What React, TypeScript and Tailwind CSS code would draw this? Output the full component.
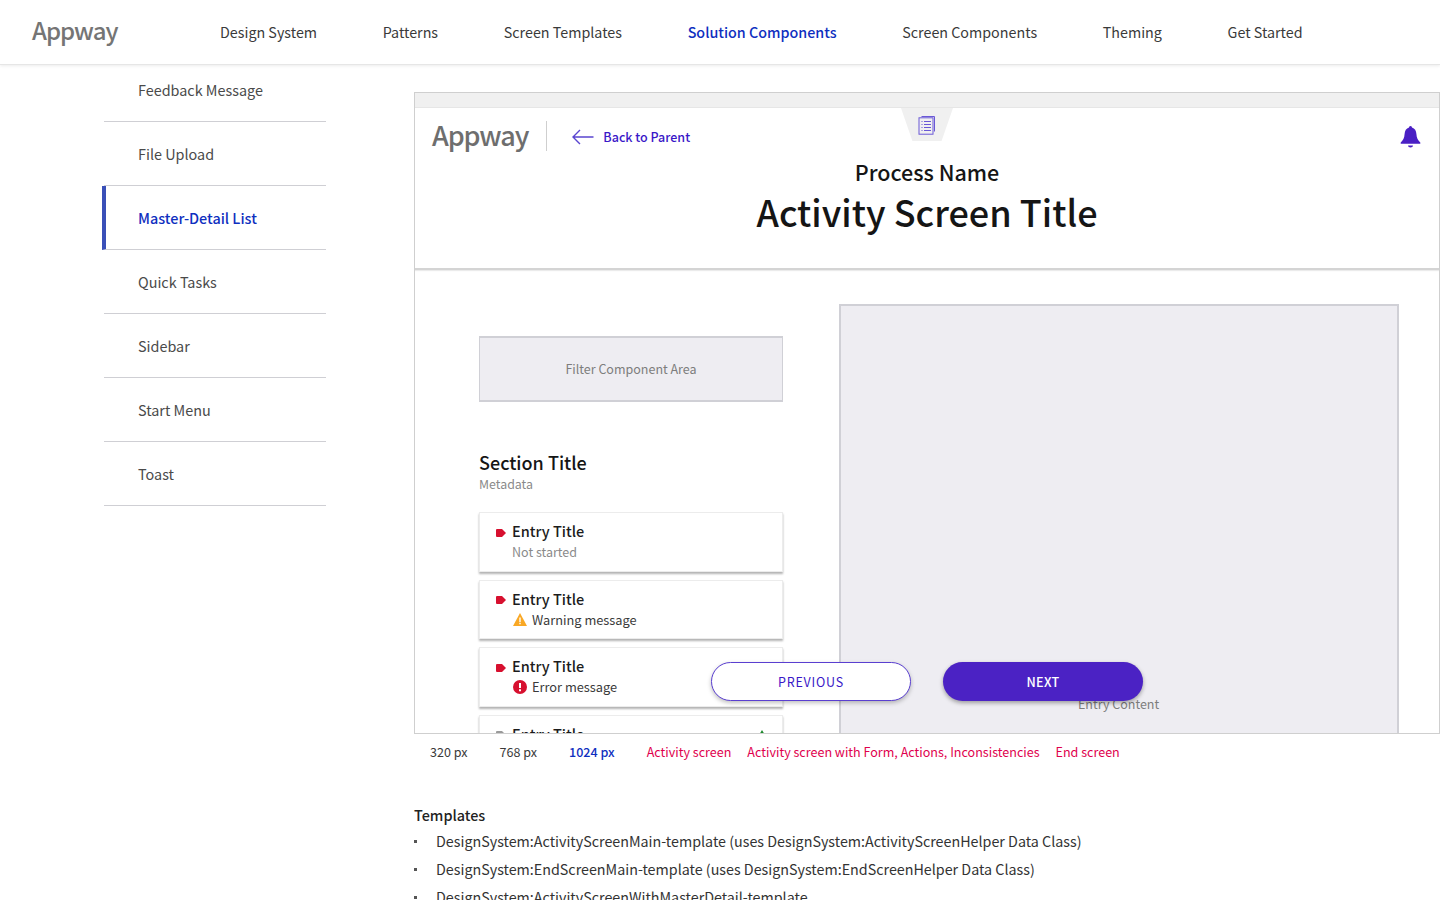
import React from 'react';

const FONT = 'font-["Noto_Sans_CJK_JP","Noto_Sans",sans-serif]';

const navItems = ['Design System', 'Patterns', 'Screen Templates', 'Solution Components', 'Screen Components', 'Theming', 'Get Started'];
const sideItems = ['Feedback Message', 'File Upload', 'Master-Detail List', 'Quick Tasks', 'Sidebar', 'Start Menu', 'Toast'];

const Tag = ({ color = '#d7102f' }: { color?: string }) => (
  <svg width="10" height="8" viewBox="0 0 10 8" className="mt-[3px] shrink-0">
    <path d="M1 0h5L10 4 6 8H1a1 1 0 0 1-1-1V1a1 1 0 0 1 1-1z" fill={color} />
  </svg>
);

const EntryCard = ({ sub, children }: { sub?: string; children?: React.ReactNode }) => (
  <div className="relative h-[59.500px] w-[304px] shrink-0 border border-[#ececec] bg-white pl-4 pt-[8px] shadow-[0_2px_2px_rgba(0,0,0,0.3)]">
    <div className="flex h-[20px] items-center gap-[6px]">
      <Tag />
      <span className="text-[14.500px] leading-[20px] font-medium text-[#1c1c1c]">Entry Title</span>
    </div>
    {sub && <div className="ml-4 mt-[1px] text-[12.500px] leading-[20px] text-[#8a8a8a]">{sub}</div>}
    {children}
  </div>
);

const App: React.FC = () => {
  return (
    <div className={`${FONT} flex h-[900px] w-[1440px] flex-col overflow-hidden bg-white text-[#333]`}>
      <header className="relative z-10 flex h-[65px] shrink-0 items-center border-b border-[#e6e6e6] bg-white pl-8 shadow-[0_1px_3px_rgba(0,0,0,0.08)]">
        <span className="mt-[-4px] w-[188px] text-[24px] leading-[32px] font-medium tracking-[-1px] text-[#757575]">Appway</span>
        <nav className="mt-[-1px] flex gap-[65.700px]">
          {navItems.map(item => (
            <a key={item} className={item === 'Solution Components' ? 'text-[14.300px] leading-[22px] font-medium text-[#0f2fc0]' : 'text-[14.300px] leading-[22px] text-[#3a3a3a]'}>
              {item}
            </a>
          ))}
        </nav>
      </header>

      <div className="flex min-h-0 flex-1">
        <aside className="ml-[102px] mt-[-7px] w-[224px] shrink-0">
          {sideItems.map(item => {
            const active = item === 'Master-Detail List';
            return (
              <div key={item} className={`flex h-[64px] items-center border-b border-[#cfcfd4] ${active ? 'border-l-[4px] border-l-[#3a50b8] pl-[32px]' : 'ml-[2px] pl-[34px]'}`}>
                <span className={active ? 'text-[14.400px] leading-[22px] font-medium text-[#0f2fc0]' : 'text-[14.400px] leading-[22px] text-[#4a4a4a]'}>{item}</span>
              </div>
            );
          })}
        </aside>

        <main className="ml-[88px] flex min-w-0 flex-1 flex-col pt-[27px]">
          <div className="relative flex h-[642px] w-[1026px] shrink-0 flex-col overflow-hidden border border-[#cfcfcf]">
            <div className="h-[15px] shrink-0 border-b border-[#e6e6e6] bg-[#f0f0f0]" />

            <div className="relative z-[1] h-[162px] shrink-0 border-b-2 border-[#d4d4d4] bg-white shadow-[0_1px_1px_rgba(0,0,0,0.08)]">
              <div className="flex items-center pl-[17px] pt-[13px]">
                <span className="mt-[-3px] text-[27px] leading-[30px] font-medium tracking-[-1.100px] text-[#6e6e6e]">Appway</span>
                <div className="ml-[18px] h-[30px] w-px bg-[#cfcfcf]" />
                <svg width="22" height="16" viewBox="0 0 22 16" fill="none" stroke="#5a45d0" strokeWidth="1.4" className="ml-[25px] mt-[1px]">
                  <path d="M21.500 8H1M8 1 1 8l7 7" />
                </svg>
                <span className="ml-[9px] mt-[1px] text-[12.500px] leading-[20px] font-medium text-[#3a18c8]">Back to Parent</span>
              </div>
              <div className="absolute left-[486px] top-0 flex h-[33px] w-[52px] justify-center bg-[#f0f0f0] pt-[7px] [clip-path:polygon(0_0,100%_0,78%_100%,22%_100%)]">
                <svg width="18" height="20" viewBox="0 0 18 20" fill="none" stroke="#6a58d6" strokeWidth="1">
                  <path d="M3.500 1.500h13v15" />
                  <rect x="1" y="2.800" width="14" height="16.400" />
                  <path d="M3.500 6.500h1M6 6.500h7M3.500 9.500h1M6 9.500h7M3.500 12.500h1M6 12.500h7M3.500 15.500h1M6 15.500h7" />
                </svg>
              </div>
              <svg width="21" height="24" viewBox="0 0 21 24" fill="#4a1fc4" className="absolute left-[985px] top-[17px]">
                <path d="M10.500 1a1.500 1.500 0 0 1 1.500 1.600c2.800.8 4.200 3.300 4.400 6.400.2 3.800 1.600 6.400 3.900 8.600v1.200H.7v-1.200C3 15.400 4.400 12.800 4.600 9c.2-3.100 1.600-5.600 4.400-6.400A1.500 1.500 0 0 1 10.500 1z" />
                <path d="M8 20.500h5a2.500 2 0 0 1-5 0z" />
              </svg>
              <div className="absolute inset-x-0 top-[49px] text-center">
                <div className="text-[21.500px] leading-[30px] font-medium text-[#151515]">Process Name</div>
                <div className="mt-[-1px] text-[36px] leading-[50px] font-medium text-[#151515]">Activity Screen Title</div>
              </div>
            </div>

            <div className="flex min-h-0 flex-1 bg-white">
              <div className="ml-[64px] flex w-[304px] shrink-0 flex-col pt-[66px]">
                <div className="flex h-[66px] shrink-0 items-center justify-center border-y-2 border-x border-[#d0d0d6] bg-[#eeedf2] text-[12.500px] text-[#7d7d7d]">
                  Filter Component Area
                </div>
                <div className="mt-[46px] text-[18px] leading-[28px] font-medium text-[#151515]">Section Title</div>
                <div className="mt-[-1px] text-[12.400px] leading-[18px] text-[#8a8a8a]">Metadata</div>
                <div className="mt-[19px] flex flex-col gap-[8px]">
                  <EntryCard sub="Not started" />
                  <EntryCard>
                    <div className="ml-[17px] mt-[1px] flex items-center gap-[5px] text-[12.800px] leading-[20px] text-[#3a3a3a]">
                      <svg width="14" height="13" viewBox="0 0 14 13" className="shrink-0">
                        <path d="M7 0 14 13H0z" fill="#f9a825" />
                        <path d="M6.300 4.500h1.400v4.500H6.300zM6.300 9.800h1.400v1.500H6.300z" fill="#fff" />
                      </svg>
                      Warning message
                    </div>
                  </EntryCard>
                  <EntryCard>
                    <div className="ml-[17px] mt-[1px] flex items-center gap-[5px] text-[12.800px] leading-[20px] text-[#3a3a3a]">
                      <svg width="14" height="14" viewBox="0 0 14 14" className="shrink-0">
                        <circle cx="7" cy="7" r="7" fill="#d7102f" />
                        <path d="M6 3h2v5H6zM6 9.200h2v2H6z" fill="#fff" />
                      </svg>
                      Error message
                    </div>
                  </EntryCard>
                  <div className="relative h-[59.500px] w-[304px] shrink-0 border border-[#ececec] bg-white pl-4 pt-[8px] shadow-[0_2px_2px_rgba(0,0,0,0.3)]">
                    <div className="flex h-[20px] items-center gap-[6px]">
                      <Tag color="#9a9a9a" />
                      <span className="text-[14.500px] leading-[20px] font-medium text-[#1c1c1c]">Entry Title</span>
                    </div>
                    <svg width="14" height="14" viewBox="0 0 14 14" className="absolute left-[275px] top-[14px]">
                      <path d="M7 0l3 5H4z" fill="#1f8a2e" />
                    </svg>
                  </div>
                </div>
              </div>
              <div className="ml-[56px] mt-[34px] h-[700px] w-[560px] shrink-0 border-2 border-[#d0d0d6] bg-[#eeedf2]" />
            </div>

            <span className="absolute left-[663px] top-[601px] text-[12.500px] leading-[20px] text-[#7d7d7d]">Entry Content</span>
            <div className="absolute left-[296px] top-[569px] z-[2] flex w-[432px] gap-[32px]">
              <button className="h-[39px] w-[200px] rounded-full border border-[#5a3fd0] bg-white pt-[1px] text-[12.500px] tracking-[0.8px] text-[#3a18c8] shadow-[0_2px_4px_rgba(0,0,0,0.25)]">PREVIOUS</button>
              <button className="h-[39px] w-[200px] rounded-full bg-[#4b22c4] pt-[1px] text-[12.600px] font-medium tracking-[0.3px] text-white shadow-[0_2px_4px_rgba(0,0,0,0.35)]">NEXT</button>
            </div>
          </div>

          <div className="mt-[8px] flex h-[22px] items-center pl-[16px] text-[12.550px] leading-[20px]">
            <span className="text-[#3a3a3a]">320 px</span>
            <span className="ml-[32px] text-[#3a3a3a]">768 px</span>
            <span className="ml-[32px] font-medium text-[#0f2fc0]">1024 px</span>
            <span className="ml-[32px] text-[#e0004d]">Activity screen</span>
            <span className="ml-[16px] text-[#e0004d]">Activity screen with Form, Actions, Inconsistencies</span>
            <span className="ml-[16px] text-[#e0004d]">End screen</span>
          </div>

          <div className="mt-[41px] text-[14.400px] leading-[24px] font-medium text-[#222]">Templates</div>
          <ul className="text-[14.300px] leading-[28px] text-[#333]">
            {[
              'DesignSystem:ActivityScreenMain-template (uses DesignSystem:ActivityScreenHelper Data Class)',
              'DesignSystem:EndScreenMain-template (uses DesignSystem:EndScreenHelper Data Class)',
              'DesignSystem:ActivityScreenWithMasterDetail-template',
            ].map(t => (
              <li key={t} className="flex items-center">
                <span className="h-[3px] w-[3px] shrink-0 bg-[#555]" />
                <span className="ml-[19px]">{t}</span>
              </li>
            ))}
          </ul>
        </main>
      </div>
    </div>
  );
};

export default App;
